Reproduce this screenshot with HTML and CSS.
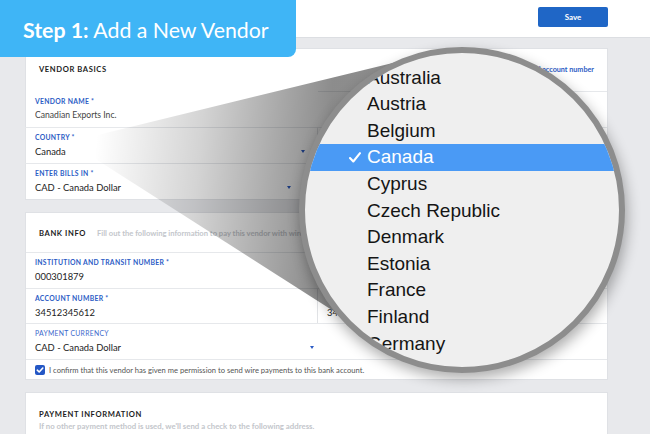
FILE: index.html
```html
<!DOCTYPE html>
<html lang="en">
<head>
<meta charset="utf-8">
<title>Add a New Vendor</title>
<link rel="stylesheet" href="styles.css">
</head>
<body>
<div class="page">
  <header class="topbar">
    <button class="save">Save</button>
  </header>

  <main class="content">
    <section class="card">
      <div class="card-head head-basics">
        <h2 class="card-title">Vendor Basics</h2>
        <a class="head-link">Add account number</a>
      </div>
      <div class="grid">
        <div class="field no-top">
          <div class="label">Vendor Name *</div>
          <div class="value light">Canadian Exports Inc.</div>
        </div>
        <div class="field"></div>
        <div class="field select divided">
          <div class="label">Country *</div>
          <div class="value-row"><span class="value">Canada</span><span class="caret caret-country"></span></div>
        </div>
        <div class="field"></div>
        <div class="field select divided last">
          <div class="label">Enter Bills In *</div>
          <div class="value-row"><span class="value">CAD - Canada Dollar</span><span class="caret caret-bills"></span></div>
        </div>
        <div class="cell-empty"></div>
      </div>
    </section>

    <section class="card">
      <div class="card-head head-bank">
        <h2 class="card-title">Bank Info</h2>
        <p class="card-desc">Fill out the following information to pay this vendor with wire transfer.</p>
      </div>
      <div class="grid">
        <div class="field">
          <div class="label">Institution and Transit Number *</div>
          <div class="value">000301879</div>
        </div>
        <div class="field"></div>
        <div class="field divided short">
          <div class="label">Account Number *</div>
          <div class="value">34512345612</div>
        </div>
        <div class="field short">
          <div class="label">Confirm Account Number *</div>
          <div class="value">34512345612</div>
        </div>
        <div class="field">
          <div class="label thin">Payment Currency</div>
          <div class="value-row"><span class="value">CAD - Canada Dollar</span><span class="caret caret-currency"></span></div>
        </div>
        <div class="field"></div>
        <label class="confirm">
          <span class="checkbox"><svg width="8" height="8" viewBox="0 0 8 8"><polyline points="1.3,4.2 3.2,6 6.8,2" fill="none" stroke="#fff" stroke-width="1.6" stroke-linecap="round" stroke-linejoin="round"/></svg></span>
          I confirm that this vendor has given me permission to send wire payments to this bank account.
        </label>
      </div>
    </section>

    <section class="card">
      <div class="card-head head-payment">
        <h2 class="card-title">Payment Information</h2>
        <p class="card-sub">If no other payment method is used, we'll send a check to the following address.</p>
      </div>
    </section>
  </main>

  <div class="step"><span class="step-num">Step 1:</span>&nbsp;Add a New Vendor</div>

  <svg class="beam" width="650" height="434" viewBox="0 0 650 434">
    <defs>
      <linearGradient id="beamGrad" gradientUnits="userSpaceOnUse" x1="95" y1="150" x2="325" y2="170">
        <stop offset="0" stop-color="#000" stop-opacity="0"/>
        <stop offset="0.45" stop-color="#000" stop-opacity="0.17"/>
        <stop offset="1" stop-color="#000" stop-opacity="0.45"/>
      </linearGradient>
    </defs>
    <polygon points="69,142 405,60 470,200 335,312" fill="url(#beamGrad)"/>
  </svg>

  <div class="lens">
    <ul class="lens-list">
      <li>Australia</li>
      <li>Austria</li>
      <li>Belgium</li>
      <li class="selected"><svg class="tick" width="12" height="11" viewBox="0 0 12 11"><polyline points="1,6 4.3,9.5 11,1.2" fill="none" stroke="#fff" stroke-width="2.1" stroke-linecap="round" stroke-linejoin="round"/></svg>Canada</li>
      <li>Cyprus</li>
      <li>Czech Republic</li>
      <li>Denmark</li>
      <li>Estonia</li>
      <li>France</li>
      <li>Finland</li>
      <li>Germany</li>
    </ul>
  </div>
</div>
</body>
</html>
```

FILE: styles.css
```css
* { box-sizing: border-box; }

html, body {
  margin: 0;
  padding: 0;
}

body {
  background: #e8e9ec;
  font-family: Lato, "Noto Sans", "Liberation Sans", sans-serif;
  color: #222;
}

.page {
  position: relative;
  width: 650px;
  height: 434px;
  overflow: hidden;
  background: #e8e9ec;
}

/* top bar */
.topbar {
  height: 38px;
  background: #fff;
  border-bottom: 1px solid #dcdee2;
  display: flex;
  justify-content: flex-end;
  align-items: flex-start;
  padding: 7px 42px 0 0;
}

.save {
  width: 70px;
  height: 20px;
  border: 0;
  border-radius: 2px;
  background: #1f66c6;
  color: #fff;
  font-family: Lato, sans-serif;
  font-weight: 700;
  font-size: 8px;
  padding: 0;
}

/* step banner */
.step {
  position: absolute;
  left: 0;
  top: 0;
  width: 296px;
  height: 57px;
  background: #3fb5f6;
  border-bottom-right-radius: 8px;
  color: #fff;
  font-size: 21.3px;
  display: flex;
  align-items: center;
  padding: 2px 0 0 23px;
  white-space: nowrap;
}

.step-num { font-weight: 700; }

/* content */
.content {
  display: flex;
  flex-direction: column;
  gap: 12px;
  padding: 10px 42px 0 25px;
}

.card {
  background: #fff;
  border: 1px solid #dfe1e5;
}

.card-head {
  display: flex;
  align-items: center;
  padding: 0 13px 0 13px;
}

.head-basics { height: 42px; justify-content: space-between; padding-bottom: 2px; }
.head-bank { height: 39px; }
.head-payment { height: 60px; flex-direction: column; align-items: flex-start; padding-top: 16px; }

.card-title {
  margin: 0;
  font-size: 7.6px;
  font-weight: 700;
  letter-spacing: 0.6px;
  text-transform: uppercase;
  color: #1d1d1d;
}

.head-link {
  font-size: 7.2px;
  font-weight: 700;
  color: #2c5cc5;
}

.card-desc {
  margin: 0 0 0 11px;
  font-size: 7.6px;
  font-weight: 700;
  color: #c3c6cb;
  white-space: nowrap;
}

.card-sub {
  margin: 2px 0 0;
  font-size: 7.8px;
  font-weight: 700;
  color: #c3c6cb;
  white-space: nowrap;
}

/* form grid */
.grid {
  display: grid;
  grid-template-columns: 292px 1fr;
}

.field {
  height: 36px;
  border-top: 1px solid #e6e8eb;
  padding: 5px 9px 0;
}

.field.no-top { border-top-color: transparent; }
.field.short { height: 35px; }
.field.last { height: 36px; }
.field.divided { border-right: 1px solid #e1e3e6; }
.field.select { border-left: 1px solid #e1e3e6; margin-left: -1px; }

.label {
  font-size: 6.8px;
  line-height: 9px;
  font-weight: 700;
  letter-spacing: 0.3px;
  text-transform: uppercase;
  color: #2c5cc5;
}

.label.thin { font-weight: 400; color: #3a67cb; }

.value {
  display: block;
  margin-top: 3px;
  font-size: 9.4px;
  line-height: 13px;
  color: #222;
}

.value.light { font-size: 8.6px; color: #444; }

.value-row {
  display: flex;
  justify-content: space-between;
  align-items: center;
}

.caret {
  width: 0;
  height: 0;
  margin-top: 3px;
  border-left: 2.5px solid transparent;
  border-right: 2.5px solid transparent;
  border-top: 3px solid #2c5cc5;
}

.caret-country { margin-right: 3px; }
.caret-bills { margin-right: 17px; }
.caret-currency { margin-right: -5px; }

.cell-empty { height: 36px; }

.confirm {
  grid-column: 1 / 3;
  height: 20px;
  border-top: 1px solid #e6e8eb;
  display: flex;
  align-items: center;
  gap: 4px;
  padding-left: 9px;
  font-size: 7.6px;
  color: #555;
  white-space: nowrap;
}

.checkbox {
  flex: none;
  width: 10px;
  height: 10px;
  border-radius: 2px;
  background: #2457c5;
  display: flex;
  align-items: center;
  justify-content: center;
}

/* magnifier beam */
.beam {
  position: absolute;
  left: 0;
  top: 0;
  pointer-events: none;
}

/* magnifier lens */
.lens {
  position: absolute;
  left: 299px;
  top: 47px;
  width: 326px;
  height: 326px;
  border-radius: 50%;
  border: 6px solid #8d8d8d;
  background: #efefef;
  overflow: hidden;
  box-shadow: 2px 6px 14px rgba(0, 0, 0, 0.32);
}

.lens-list {
  list-style: none;
  margin: 0;
  padding: 11.7px 0 0;
  font-family: "Liberation Sans", Arial, sans-serif;
  font-size: 19px;
  color: #151515;
}

.lens-list li {
  height: 26.6px;
  line-height: 26.6px;
  padding-left: 62px;
  position: relative;
  white-space: nowrap;
}

.lens-list li.selected {
  background: #4a9af5;
  color: #fff;
}

.tick {
  position: absolute;
  left: 44px;
  top: 8px;
}
```
